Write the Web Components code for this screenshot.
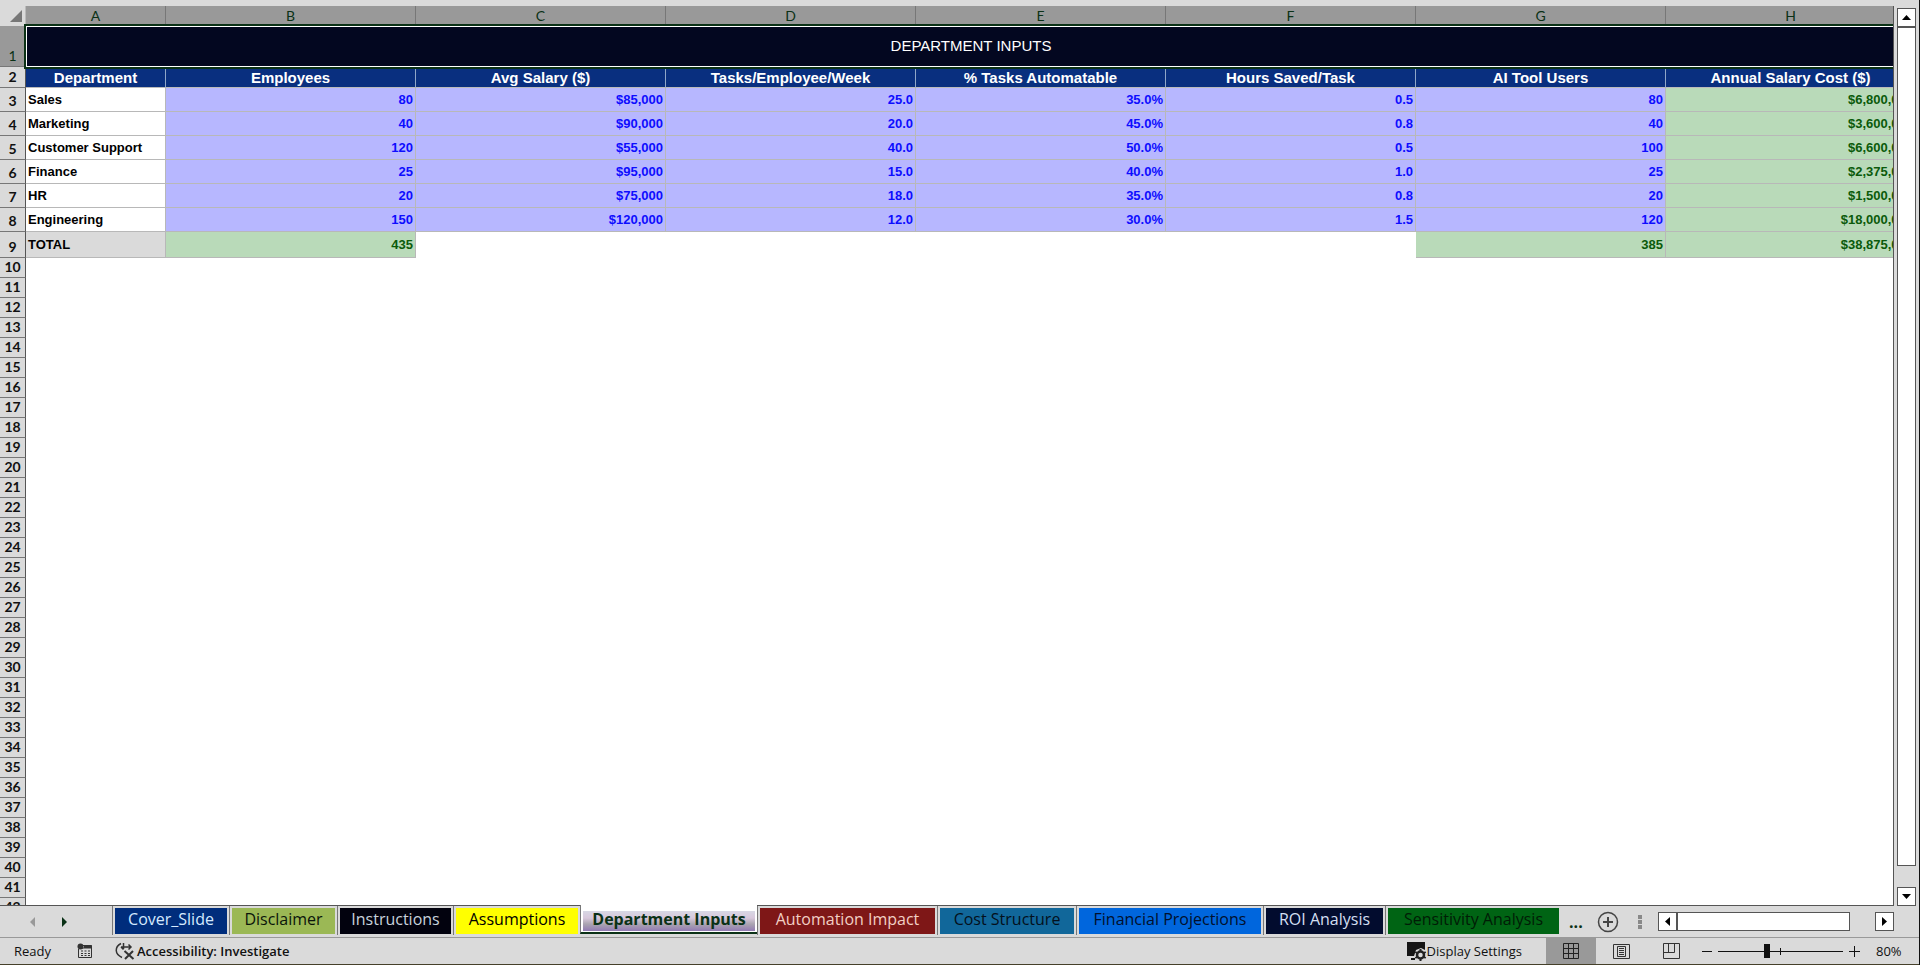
<!DOCTYPE html>
<html lang="en">
<head>
<meta charset="utf-8">
<title>Department Inputs</title>
<style>
  html, body {
    height: 100%;
    margin: 0;
  }
  body {
    background: #dadada;
    font-family: "Open Sans", "Noto Sans", sans-serif;
    overflow: hidden;
  }
</style>
</head>
<body>
<workbook-app>
  <sheet-grid></sheet-grid>
  <scroll-bar slot="scroll" direction="vertical"></scroll-bar>
  <sheet-tabs slot="tabs">
    <sheet-tab color="#002d7c" ink="#d5eaff">Cover_Slide</sheet-tab>
    <sheet-tab color="#9bb855" ink="#0a140a">Disclaimer</sheet-tab>
    <sheet-tab color="#02020e" ink="#c8d2dc">Instructions</sheet-tab>
    <sheet-tab color="#ffff00" ink="#000000">Assumptions</sheet-tab>
    <sheet-tab active ink="#0a3116">Department Inputs</sheet-tab>
    <sheet-tab color="#7e1717" ink="#f2cfc4">Automation Impact</sheet-tab>
    <sheet-tab color="#11679a" ink="#04101c">Cost Structure</sheet-tab>
    <sheet-tab color="#0066dd" ink="#02102c">Financial Projections</sheet-tab>
    <sheet-tab color="#020c2e" ink="#d3dff2">ROI Analysis</sheet-tab>
    <sheet-tab color="#006414" ink="#001c06">Sensitivity Analysis</sheet-tab>
    <scroll-bar slot="scroll" direction="horizontal"></scroll-bar>
  </sheet-tabs>
  <status-bar slot="status"></status-bar>
</workbook-app>

<script>
// WorkbookApp
customElements.define(
  "workbook-app",
  class WorkbookApp extends HTMLElement {
    constructor() {
      super();
      const template = document.createElement("template");
      template.innerHTML = `
      <style>
        :host {
          border-right: 1px solid #111;
          box-sizing: border-box;
          display: grid;
          grid-template-columns: minmax(0, 1fr) 25px;
          grid-template-rows: minmax(0, 1fr) 31px 28px;
          height: 100vh;
        }
        .tabs, .status {
          grid-column: 1 / -1;
          min-width: 0;
        }
        .grid {
          display: grid;
          min-height: 0;
          min-width: 0;
        }
        .scroll {
          display: grid;
          padding: 8px 3px 0;
        }
      </style>
      <div class="grid"><slot></slot></div>
      <div class="scroll"><slot name="scroll"></slot></div>
      <div class="tabs"><slot name="tabs"></slot></div>
      <div class="status"><slot name="status"></slot></div>
      `;
      this.attachShadow({ mode: "open" }).appendChild(
        template.content.cloneNode(true)
      );
    }
  }
);

// SheetGrid
const HEADINGS = [
  "Department",
  "Employees",
  "Avg Salary ($)",
  "Tasks/Employee/Week",
  "% Tasks Automatable",
  "Hours Saved/Task",
  "AI Tool Users",
  "Annual Salary Cost ($)",
];
const DEPARTMENTS = [
  ["Sales", "80", "$85,000", "25.0", "35.0%", "0.5", "80", "$6,800,000"],
  ["Marketing", "40", "$90,000", "20.0", "45.0%", "0.8", "40", "$3,600,000"],
  ["Customer Support", "120", "$55,000", "40.0", "50.0%", "0.5", "100", "$6,600,000"],
  ["Finance", "25", "$95,000", "15.0", "40.0%", "1.0", "25", "$2,375,000"],
  ["HR", "20", "$75,000", "18.0", "35.0%", "0.8", "20", "$1,500,000"],
  ["Engineering", "150", "$120,000", "12.0", "30.0%", "1.5", "120", "$18,000,000"],
];
const TOTALS = ["TOTAL", "435", "", "", "", "", "385", "$38,875,000"];
const LAST_ROW = 42;

customElements.define(
  "sheet-grid",
  class SheetGrid extends HTMLElement {
    constructor() {
      super();
      const template = document.createElement("template");
      template.innerHTML = `
      <style>
        :host {
          border-bottom: 1px solid #555;
          display: block;
          min-height: 0;
          overflow: hidden;
          padding-top: 6px;
        }
        .view {
          border-right: 1px solid #555;
          height: 100%;
          overflow: hidden;
        }
        table {
          background: #fff;
          border-collapse: separate;
          border-spacing: 0;
          font: bold 13px/18px "Liberation Sans", Arial, sans-serif;
          table-layout: fixed;
          width: 1916px;
        }
        .gutter { width: 26px; }
        .first { width: 140px; }
        th, td {
          box-sizing: border-box;
          height: 20px;
          padding: 0 2px;
          white-space: nowrap;
        }
        thead th {
          background: #999;
          border-right: 1px solid #777;
          color: #0a3116;
          font: 14px/20px Lato, sans-serif;
        }
        thead .corner {
          background: #dadada;
          border-right: 1px solid #bbb;
          padding: 0 3px 0 0;
        }
        .corner svg {
          display: block;
          margin-left: auto;
        }
        tbody th {
          background: #dadada;
          border-bottom: 1px solid #777;
          border-right: 1px solid #555;
          color: #111;
          font: bold 14px/18px Lato, sans-serif;
          padding: 0 0 1px;
          vertical-align: bottom;
        }
        .title th {
          background: #999;
          color: #0a3116;
          font-weight: normal;
          height: 41px;
        }
        .title td {
          background: #030720;
          box-shadow: inset 0 0 0 1px #fff;
          color: #fff;
          font-size: 15px;
          font-weight: normal;
          outline: 2px solid #0a3116;
          padding-bottom: 2px;
          text-align: center;
        }
        .headings th { height: 21px; }
        .headings td {
          background: #092f7f;
          border-bottom: 1px solid #bbb;
          border-right: 1px solid #8fa6c8;
          color: #fff;
          font-size: 15px;
          padding-top: 2px;
          text-align: center;
        }
        .data th { height: 24px; }
        .total th { height: 26px; }
        .data td, .total .filled {
          border-bottom: 1px solid #b8b8b8;
          border-right: 1px solid #b8b8b8;
          text-align: right;
        }
        .data td {
          background: #b7b7ff;
          color: #0d0dff;
        }
        .total td {
          color: #0b5a0b;
        }
        .total .filled, .data td:last-child {
          background: #b9dab9;
          color: #0b5a0b;
        }
        .data td:nth-child(2) {
          background: #fff;
          color: #000;
          text-align: left;
        }
        .total td:nth-child(2) {
          background: #dadada;
          color: #000;
          text-align: left;
        }
      </style>
      <div class="view">
        <table>
          <colgroup>
            <col class="gutter"><col class="first"><col span="7">
          </colgroup>
          <thead></thead>
          <tbody></tbody>
        </table>
      </div>
      `;
      this.attachShadow({ mode: "open" }).appendChild(
        template.content.cloneNode(true)
      );
    }
    connectedCallback() {
      this.shadowRoot.querySelector("thead").innerHTML = `
        <tr>
          <th class="corner"><svg width="12" height="12" viewBox="0 0 12 12" role="img" aria-label="Select all"><path d="M12 0v12H0z" fill="#777"/></svg></th>
          ${[..."ABCDEFGH"].map((letter) => `<th scope="col">${letter}</th>`).join("")}
        </tr>`;

      const rows = [
        `<tr class="title"><th scope="row">1</th><td colspan="8">DEPARTMENT INPUTS</td></tr>`,
        this.row(2, "headings", HEADINGS),
        ...DEPARTMENTS.map((cells, i) => this.row(i + 3, "data", cells)),
        this.row(9, "total", TOTALS),
      ];
      for (let n = 10; n <= LAST_ROW; n++) {
        rows.push(`<tr><th scope="row">${n}</th><td colspan="8"></td></tr>`);
      }
      this.shadowRoot.querySelector("tbody").innerHTML = rows.join("");
    }
    row(number, type, cells) {
      const tds = cells
        .map((text) => `<td${text ? ' class="filled"' : ""}>${text}</td>`)
        .join("");
      return `<tr class="${type}"><th scope="row">${number}</th>${tds}</tr>`;
    }
  }
);

// ScrollBar
customElements.define(
  "scroll-bar",
  class ScrollBar extends HTMLElement {
    constructor() {
      super();
      const template = document.createElement("template");
      template.innerHTML = `
      <style>
        :host {
          display: flex;
          min-height: 0;
        }
        :host([direction="vertical"]) {
          flex-direction: column;
        }
        :host([direction="horizontal"]) {
          height: 19px;
          width: 236px;
        }
        button {
          align-items: center;
          background: #fff;
          border: 1px solid #555;
          box-sizing: border-box;
          display: flex;
          flex: none;
          height: 19px;
          justify-content: center;
          padding: 0;
          width: 19px;
        }
        .track {
          display: flex;
          flex: 1;
          flex-direction: inherit;
        }
        .thumb {
          background: #fff;
          border: 1px solid #555;
          box-sizing: border-box;
          flex: 1;
        }
        .rest {
          flex: 0 0 21px;
        }
        :host([direction="horizontal"]) .rest {
          flex-basis: 25px;
        }
      </style>
      <button type="button" class="back"><svg width="9" height="9" viewBox="0 0 9 9" aria-hidden="true"><path/></svg></button>
      <div class="track"><div class="thumb"></div><div class="rest"></div></div>
      <button type="button" class="forward"><svg width="9" height="9" viewBox="0 0 9 9" aria-hidden="true"><path/></svg></button>
      `;
      this.attachShadow({ mode: "open" }).appendChild(
        template.content.cloneNode(true)
      );
    }
    connectedCallback() {
      const vertical = this.getAttribute("direction") === "vertical";
      const back = this.shadowRoot.querySelector(".back");
      const forward = this.shadowRoot.querySelector(".forward");
      back.setAttribute("aria-label", vertical ? "Scroll up" : "Scroll left");
      forward.setAttribute("aria-label", vertical ? "Scroll down" : "Scroll right");
      back
        .querySelector("path")
        .setAttribute("d", vertical ? "M0 7L4.500 2L9 7z" : "M7 0L2 4.500L7 9z");
      forward
        .querySelector("path")
        .setAttribute("d", vertical ? "M0 2L4.500 7L9 2z" : "M2 0L7 4.500L2 9z");
    }
  }
);

// SheetTabs
customElements.define(
  "sheet-tabs",
  class SheetTabs extends HTMLElement {
    constructor() {
      super();
      const template = document.createElement("template");
      template.innerHTML = `
      <style>
        :host {
          display: flex;
          height: 31px;
        }
        button {
          background: none;
          border: 0;
          padding: 0;
        }
        button svg { display: block; }
        .arrows {
          align-items: center;
          display: flex;
          flex: none;
          gap: 20px;
          padding-left: 28px;
          width: 84px;
        }
        .list {
          display: grid;
          grid-template-columns: 117px 108px 116px 127px 177px 180px 139px 187px 122px 176px;
          flex: none;
        }
        .more {
          color: #0a3116;
          font: bold 16px/20px "Open Sans", sans-serif;
          margin-left: 8px;
        }
        .tools {
          align-items: center;
          display: flex;
          flex: 1;
        }
        .add { margin-left: 14px; }
        .grip { margin-left: 19px; }
        .scroll {
          margin-left: auto;
          padding-right: 25px;
        }
      </style>
      <div class="arrows">
        <button type="button" aria-label="Previous sheets" disabled><svg width="12" height="12" viewBox="0 0 12 12"><path d="M7 1v10L2 6z" fill="#999"/></svg></button>
        <button type="button" aria-label="Next sheets"><svg width="12" height="12" viewBox="0 0 12 12"><path d="M2 1v10l5-5z" fill="#0a3116"/></svg></button>
      </div>
      <div class="list" role="tablist"><slot></slot></div>
      <div class="tools">
        <button type="button" class="more">...</button>
        <button type="button" class="add" aria-label="New sheet">
          <svg width="22" height="22" viewBox="0 0 22 22" fill="none" stroke="#444"><circle cx="11" cy="11" r="9.500" stroke-width="1.500"/><path d="M11 6v10M6 11h10" stroke-width="2"/></svg>
        </button>
        <svg class="grip" width="4" height="14" viewBox="0 0 4 14" fill="#888" aria-hidden="true"><path d="M0 0h4v4H0zM0 5h4v4H0zM0 10h4v4H0z"/></svg>
        <div class="scroll"><slot name="scroll"></slot></div>
      </div>
      `;
      this.attachShadow({ mode: "open" }).appendChild(
        template.content.cloneNode(true)
      );
    }
  }
);

// SheetTab
customElements.define(
  "sheet-tab",
  class SheetTab extends HTMLElement {
    constructor() {
      super();
      const template = document.createElement("template");
      template.innerHTML = `
      <style>
        :host {
          display: flex;
          box-sizing: border-box;
          height: 29px;
          padding: 2px 2px 1px;
          border-left: 1px solid #777;
          color: var(--tab-ink);
        }
        button {
          background: var(--tab-color);
          border: 0;
          color: inherit;
          flex: 1;
          font: 16px/20px "Open Sans", "Noto Sans", sans-serif;
          padding: 0 0 4px;
          white-space: nowrap;
        }
        :host([active]) {
          background: #fff;
          border-bottom: 2px solid #0a3116;
          margin-top: -1px;
          padding: 6px 2px 1px;
        }
        :host([active]) button {
          background: linear-gradient(#d8d8e4, #d8c8dc 35%, #aaa5b0 65%, #927ab4);
          font-weight: bold;
          line-height: 17px;
        }
      </style>
      <button type="button" role="tab"><slot></slot></button>
      `;
      this.attachShadow({ mode: "open" }).appendChild(
        template.content.cloneNode(true)
      );
    }
    connectedCallback() {
      this.style.setProperty("--tab-color", this.getAttribute("color"));
      this.style.setProperty("--tab-ink", this.getAttribute("ink"));
      this.shadowRoot
        .querySelector("button")
        .setAttribute("aria-selected", this.hasAttribute("active"));
    }
  }
);

// StatusBar
customElements.define(
  "status-bar",
  class StatusBar extends HTMLElement {
    constructor() {
      super();
      const template = document.createElement("template");
      template.innerHTML = `
      <style>
        :host {
          align-items: center;
          border-bottom: 1px solid #45402a;
          border-top: 1px solid #999;
          box-sizing: border-box;
          color: #111;
          display: flex;
          font-size: 13px;
          height: 28px;
          line-height: 20px;
          padding: 0 17px 0 14px;
        }
        button {
          align-items: center;
          background: none;
          border: 0;
          color: inherit;
          display: flex;
          font: inherit;
          height: 26px;
          padding: 0;
        }
        svg { flex: none; }
        .macro { margin-left: 26px; }
        .access {
          font-weight: 600;
          gap: 2px;
          margin-left: 22px;
        }
        .display { margin-left: auto; margin-right: 24px; }
        .view {
          justify-content: center;
          width: 50px;
        }
        .view[aria-pressed="true"] { background: #999; }
        .zoom {
          align-items: center;
          display: flex;
          gap: 6px;
          margin-left: 6px;
        }
        .level {
          min-width: 26px;
          margin-left: 16px;
        }
        input {
          appearance: none;
          background: linear-gradient(#111, #111) center / 100% 1px no-repeat,
            linear-gradient(#111, #111) center / 1px 7px no-repeat;
          height: 16px;
          margin: 0;
          width: 125px;
        }
        input::-webkit-slider-thumb {
          appearance: none;
          background: #111;
          height: 14px;
          width: 6px;
        }
      </style>
      <span>Ready</span>
      <button type="button" class="macro" aria-label="Record macro">
        <svg width="16" height="16" viewBox="0 0 16 16" fill="none" stroke="#333"><path d="M1.500 6v8.500h13V2.500H6M2 5h12.500" /><path d="M7 3.500h7.500" stroke-width="3"/><circle cx="3.500" cy="3.500" r="3" fill="#333" stroke="none"/><path d="M4 8h2m1.500 0h2M11 8h2M4 10.500h2m1.500 0h2m1.500 0h2M4 12.500h2m1.500 0h2m1.500 0h2"/></svg>
      </button>
      <button type="button" class="access">
        <svg width="20" height="18" viewBox="0 0 20 18" fill="none" stroke="#333" stroke-width="1.500"><path d="M6 1.500C-.5 5-.5 12 7 15.500M6 5h10M13.500 2.500L16 5l-2.500 2.500M8.500 1v6M6 5l2.500 2.500"/><path d="M9.500 9l9 8M18 9l-8 8" stroke-width="2"/></svg>
        Accessibility: Investigate
      </button>
      <button type="button" class="display">
        <svg width="21" height="20" viewBox="0 0 21 20"><path d="M1 1h18v8l-4-2-5 2-2 6H1z" fill="#151515"/><path d="M5 17h4v2H5z" fill="#151515"/><circle cx="14.500" cy="14" r="3.500" fill="none" stroke="#222" stroke-width="2.500"/><path d="M14.500 8v3m0 6v3M9.300 11l2.600 1.500m5.200 3l2.600 1.500M9.300 17l2.600-1.500m5.200-3l2.600-1.500" stroke="#222" stroke-width="2"/></svg>
        Display Settings
      </button>
      <button type="button" class="view" aria-label="Normal view" aria-pressed="true">
        <svg width="17" height="17" viewBox="0 0 17 17" fill="none" stroke="#222"><path d="M.5.5h15v15H.5zM5.500.5v15M10.500.5v15M.5 5.500h15M.5 10.500h15"/></svg>
      </button>
      <button type="button" class="view" aria-label="Page layout" aria-pressed="false">
        <svg width="17" height="17" viewBox="0 0 17 17" fill="none" stroke="#333"><path d="M.5 1.500h16v14H.5zM4.500 3.500h8v10h-8zM6 5.500h5M6 7.500h5M6 9.500h5M6 11.500h5"/></svg>
      </button>
      <button type="button" class="view" aria-label="Page break preview" aria-pressed="false">
        <svg width="17" height="17" viewBox="0 0 17 17" fill="none" stroke="#333"><path d="M.5.500h16v15H.5zM5.500.5v9M11.500.5v9M.5 9.500h11"/></svg>
      </button>
      <div class="zoom">
        <button type="button" aria-label="Zoom out"><svg width="10" height="11" viewBox="0 0 10 11" stroke="#111"><path d="M0 5.500h10"/></svg></button>
        <input type="range" min="10" max="190" value="80" aria-label="Zoom">
        <button type="button" aria-label="Zoom in"><svg width="11" height="11" viewBox="0 0 11 11" stroke="#111"><path d="M0 5.500h11M5.500 0v11"/></svg></button>
      </div>
      <button type="button" class="level">80%</button>
      `;
      this.attachShadow({ mode: "open" }).appendChild(
        template.content.cloneNode(true)
      );
    }
  }
);
</script>
</body>
</html>
